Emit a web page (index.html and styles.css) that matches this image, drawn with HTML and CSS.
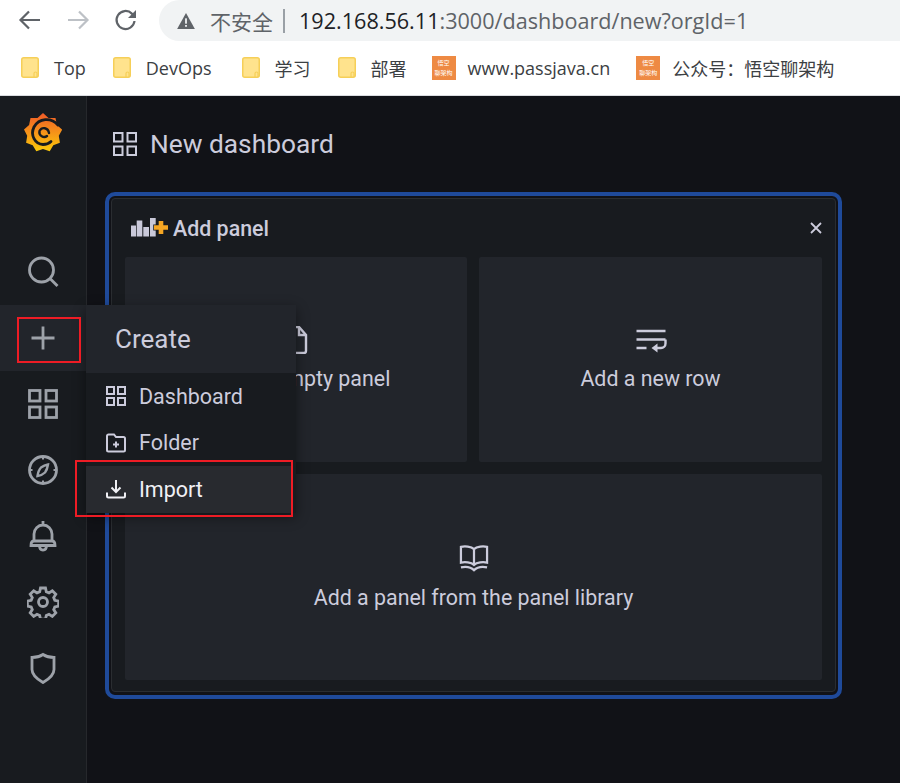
FILE: index.html
```html
<!DOCTYPE html>
<html>
<head>
  <meta charset="UTF-8">
  <title>New dashboard - Grafana</title>
  <link rel="stylesheet" href="styles.css">
</head>
<body>
  <!-- Browser toolbar -->
  <div class="browser">
    <div class="toolbar">
      <svg class="nav-btn" viewBox="0 0 24 24"><path d="M22 12H3M11 3.500L2.500 12l8.500 8.500"/></svg>
      <svg class="nav-btn nav-off" viewBox="0 0 24 24"><path d="M2 12h19M13 3.500l8.500 8.500-8.500 8.500"/></svg>
      <svg class="nav-btn" viewBox="0 0 24 24"><path d="M20.500 13a9 9 0 1 1-2.600-7.400L21 8.500"/><path class="solid" d="M22 2v8h-8z"/></svg>
      <div class="address">
        <svg class="warn" viewBox="0 0 20 18"><path d="M10 0l10 18H0z"/><rect x="9" y="6" width="2" height="6" fill="#f1f3f4"/><rect x="9" y="13.500" width="2" height="2" fill="#f1f3f4"/></svg>
        <span class="not-secure">不安全</span>
        <span class="sep"></span>
        <span class="url"><b>192.168.56.11</b>:3000/dashboard/new?orgId=1</span>
      </div>
    </div>
    <div class="bookmarks">
      <div class="mark mark-first"><svg class="folder" viewBox="0 0 18 21"><rect x="0.750" y="0.750" width="16.500" height="19.500" rx="2"/><path class="clip" d="M13 20v-3.500a1.500 1.500 0 0 1 3 0V20"/></svg><span>Top</span></div>
      <div class="mark mark-devops"><svg class="folder" viewBox="0 0 18 21"><rect x="0.750" y="0.750" width="16.500" height="19.500" rx="2"/><path class="clip" d="M13 20v-3.500a1.500 1.500 0 0 1 3 0V20"/></svg><span>DevOps</span></div>
      <div class="mark mark-first"><svg class="folder" viewBox="0 0 18 21"><rect x="0.750" y="0.750" width="16.500" height="19.500" rx="2"/><path class="clip" d="M13 20v-3.500a1.500 1.500 0 0 1 3 0V20"/></svg><span>学习</span></div>
      <div class="mark mark-last"><svg class="folder" viewBox="0 0 18 21"><rect x="0.750" y="0.750" width="16.500" height="19.500" rx="2"/><path class="clip" d="M13 20v-3.500a1.500 1.500 0 0 1 3 0V20"/></svg><span>部署</span></div>
      <div class="mark mark-site"><div class="favicon">悟空<br>聊架构</div><span>www.passjava.cn</span></div>
      <div class="mark mark-site"><div class="favicon">悟空<br>聊架构</div><span>公众号：悟空聊架构</span></div>
    </div>
  </div>

  <div class="app">
    <!-- Sidebar -->
    <div class="sidebar">
      <div class="logo-row">
        <svg class="logo" viewBox="0 0 38 40">
          <defs>
            <linearGradient id="flame" x1="0" y1="0" x2="0" y2="1">
              <stop offset="0" stop-color="#f05a28"/>
              <stop offset="1" stop-color="#fbca0a"/>
            </linearGradient>
          </defs>
          <path fill="url(#flame)" d="M19 0l5.500 5 7-.0 1.400 7 5.300 4.600-3.400 6.200 1.100 7-6.600 2.500-3.600 6-6.700-2.300-6.700 2.300-3.600-6-6.600-2.500 1.100-7L0 16.600 5.100 12l1.400-7h7z"/>
          <path class="logo-gap" d="M34 12C27 4 15 5 10 14 6 22 11 31 19 31.500c3 0 6-1 8-3"/>
          <path class="logo-gap inner" d="M25 20C24 14.500 18 13.500 15.500 18 14.500 23 20 25.500 23 23"/>
        </svg>
      </div>
      <div class="side-item">
        <svg class="side-icon" viewBox="0 0 32 32"><circle cx="14.500" cy="14" r="12"/><path d="M23.500 23l7 7"/></svg>
      </div>
      <div class="side-item side-active">
        <svg class="side-icon" viewBox="0 0 32 32"><path d="M16 4.500v23M4.500 16h23"/></svg>
        <!-- Create menu -->
        <div class="menu">
          <div class="menu-head">Create</div>
          <div class="menu-item">
            <svg class="menu-icon" viewBox="0 0 20 20"><rect x="1" y="1" width="7" height="7"/><rect x="12" y="1" width="7" height="7"/><rect x="1" y="12" width="7" height="7"/><rect x="12" y="12" width="7" height="7"/></svg>
            Dashboard
          </div>
          <div class="menu-item">
            <svg class="menu-icon" viewBox="0 0 20 20"><path d="M1 3a1.500 1.500 0 0 1 1.500-1.500H8L10 4h7.500A1.500 1.500 0 0 1 19 5.500V17a1.500 1.500 0 0 1-1.500 1.500h-15A1.500 1.500 0 0 1 1 17z"/><path d="M10 8.500v6M7 11.500h6"/></svg>
            Folder
          </div>
          <div class="menu-item menu-on">
            <svg class="menu-icon" viewBox="0 0 20 20"><path d="M10 1v11.500M5.500 8.500l4.500 4.500 4.500-4.500"/><path d="M1 13.500V17a1.500 1.500 0 0 0 1.500 1.500h15A1.500 1.500 0 0 0 19 17v-3.500"/></svg>
            Import
          </div>
        </div>
        <div class="red-box red-plus"></div>
        <div class="red-box red-import"></div>
      </div>
      <div class="side-item">
        <svg class="side-icon" viewBox="0 0 32 32"><rect x="2.500" y="2.500" width="10.500" height="10.500"/><rect x="19" y="2.500" width="10.500" height="10.500"/><rect x="2.500" y="19" width="10.500" height="10.500"/><rect x="19" y="19" width="10.500" height="10.500"/></svg>
      </div>
      <div class="side-item">
        <svg class="side-icon" viewBox="0 0 32 32"><circle cx="16" cy="16" r="13.500"/><path class="compass-needle" d="M21 10.500C20.500 14 19.500 16.500 18 18.500 16 20.500 13.500 21.500 10.500 22 11 18.500 12 15.500 14 13.500 16 12 18 11 21 10.500z"/><path class="compass-tick" d="M16 2.500v3M16 26.500v3M2.500 16h3M26.500 16h3"/></svg>
      </div>
      <div class="side-item">
        <svg class="side-icon" viewBox="0 0 32 32"><path d="M16 1v4M7 21v-7a9 9 0 0 1 18 0v7M4 25.500c0-2.500 1-4.500 3-4.500h18c2 0 3 2 3 4.500z"/><path d="M12.500 25.500c0 3 1.500 4.500 3.500 4.500s3.500-1.500 3.500-4.500"/></svg>
      </div>
      <div class="side-item">
        <svg class="side-icon" viewBox="0 0 32 32"><circle cx="16" cy="16" r="4.500"/><path d="M13.500 2h5l.8 3.800 2.700 1.100 3.300-2.100 3.500 3.500-2.100 3.300 1.100 2.700 3.800.8v5l-3.800.8-1.100 2.700 2.100 3.300-3.500 3.500-3.300-2.100-2.700 1.100-.8 3.800h-5l-.8-3.800-2.700-1.100-3.300 2.100-3.500-3.500 2.100-3.300-1.100-2.700-3.800-.8v-5l3.800-.8 1.100-2.700-2.100-3.300 3.500-3.500 3.300 2.100 2.700-1.100z"/></svg>
      </div>
      <div class="side-item">
        <svg class="side-icon" viewBox="0 0 32 32"><path d="M16 2.500c3 2 7 3 11 3v12c0 5-4 9-11 13C9 26.500 5 22.500 5 17.500v-12c4 0 8-1 11-3z"/></svg>
      </div>
    </div>

    <!-- Main -->
    <div class="main">
      <div class="page-head">
        <svg class="page-icon" viewBox="0 0 24 24"><rect x="1" y="1" width="8.500" height="8.500"/><rect x="14.500" y="1" width="8.500" height="8.500"/><rect x="1" y="14.500" width="8.500" height="8.500"/><rect x="14.500" y="14.500" width="8.500" height="8.500"/></svg>
        <span>New dashboard</span>
      </div>
      <div class="panel-frame">
        <div class="panel">
          <div class="panel-head">
            <svg class="panel-logo" viewBox="0 0 38 21">
              <rect x="1" y="7.500" width="5" height="11" fill="#c9c9d9"/>
              <rect x="6.700" y="2.500" width="5.600" height="16" fill="#c9c9d9"/>
              <rect x="13.300" y="9" width="5.700" height="9.500" fill="#c9c9d9"/>
              <rect x="20" y="0" width="5.700" height="18.500" fill="#c9c9d9"/>
              <path class="logo-plus" d="M28.700 3h4.600v4.200h4.700v4.600h-4.700V16h-4.600v-4.200H24V7.200h4.700z"/>
            </svg>
            <span class="panel-title">Add panel</span>
            <svg class="close" viewBox="0 0 12 12"><path d="M1 1l10 10M11 1L1 11"/></svg>
          </div>
          <div class="cards">
            <div class="card">
              <svg class="card-icon" viewBox="0 0 24 28"><path d="M2 3a2 2 0 0 1 2-2h11l7 8v16a2 2 0 0 1-2 2H4a2 2 0 0 1-2-2z"/><path d="M15 1v8h7"/></svg>
              <span>Add an empty panel</span>
            </div>
            <div class="card">
              <svg class="card-icon" viewBox="0 0 32 24"><path d="M1.500 3h29M1.500 11.500h29M1.500 20h10"/><path d="M30.500 11.500v4a4.500 4.500 0 0 1-4.500 4.500h-7"/><path class="solid" d="M22.500 15.500v9L16.500 20z"/></svg>
              <span>Add a new row</span>
            </div>
            <div class="card card-wide">
              <svg class="card-icon" viewBox="0 0 32 30"><path d="M16 5.500C13 2.500 6 2 2 3v17c4-1 11-.5 14 2.500 3-3 10-3.500 14-2.500V3c-4-1-11-.5-14 2.500zM16 5.500v17"/><path d="M2 25c5-1 11 0 14 3 3-3 9-4 14-3"/></svg>
              <span>Add a panel from the panel library</span>
            </div>
          </div>
        </div>
      </div>
    </div>
  </div>
</body>
</html>
```

FILE: styles.css
```css
* {
  box-sizing: border-box;
}

body {
  margin: 0;
  height: 783px;
  overflow: hidden;
  font-family: Roboto, sans-serif;
  background: #111217;
  display: flex;
  flex-direction: column;
}

svg {
  display: block;
  flex: none;
}

/* Browser toolbar */
.browser {
  height: 96px;
  background: #fff;
  flex: none;
  font-family: "Open Sans", "Noto Sans CJK SC", sans-serif;
}

.toolbar {
  height: 42px;
  display: flex;
  align-items: flex-start;
  padding-left: 18px;
}

.nav-btn {
  width: 24px;
  height: 24px;
  margin: 8px 24px 0 0;
  fill: none;
  stroke: #5f6368;
  stroke-width: 2.2;
}

.nav-btn .solid {
  fill: #5f6368;
  stroke: none;
}

.nav-off {
  stroke: #bdc1c6;
}

.address {
  width: 741px;
  height: 41px;
  margin-left: -3px;
  background: #f1f3f4;
  border-radius: 21px 0 0 21px;
  display: flex;
  align-items: center;
  padding-left: 18px;
}

.warn {
  width: 18px;
  height: 16px;
  fill: #5f6368;
}

.not-secure {
  margin-left: 15px;
  font-size: 21px;
  color: #5f6368;
}

.sep {
  width: 2px;
  height: 24px;
  background: #9aa0a6;
  margin: 0 14px 0 10px;
}

.url {
  font-size: 21.600px;
  color: #5f6368;
  white-space: nowrap;
}

.url b {
  font-weight: 400;
  color: #202124;
}

.bookmarks {
  height: 54px;
  border-bottom: 1px solid #dadce0;
  display: flex;
  align-items: center;
  padding: 0 0 2px 21px;
  font-size: 18px;
  color: #3c4043;
}

.mark {
  display: flex;
  align-items: center;
  margin-right: 28px;
  white-space: nowrap;
}

.mark-first {
  margin-right: 27px;
}

.mark-devops {
  margin-right: 30px;
}

.mark-last {
  margin-right: 25px;
}

.mark-site {
  margin-right: 26px;
}

.folder {
  width: 18px;
  height: 21px;
  margin-right: 15px;
}

.folder rect {
  fill: #ffe38d;
  stroke: #f6cf58;
  stroke-width: 1.5;
}

.folder .clip {
  fill: none;
  stroke: #f6cf58;
  stroke-width: 1.2;
}

.favicon {
  width: 24px;
  height: 24px;
  margin-right: 12px;
  background: #ee8a43;
  color: #fff;
  font-size: 6px;
  line-height: 10px;
  padding-top: 2px;
  text-align: center;
  overflow: hidden;
}

/* App */
.app {
  flex: 1;
  display: flex;
  min-height: 0;
}

.sidebar {
  width: 87px;
  flex: none;
  background: #181b1f;
  border-right: 1px solid #26282c;
}

.logo-row {
  height: 143px;
  padding: 17px 0 0 24px;
}

.logo {
  width: 38px;
  height: 40px;
}

.logo-gap {
  fill: none;
  stroke: #181b1f;
  stroke-width: 2.800;
  stroke-linecap: round;
}

.logo-gap.inner {
  stroke-width: 2.400;
}

.side-item {
  height: 66px;
  display: flex;
  align-items: center;
  justify-content: center;
  position: relative;
}

.side-active {
  background: #22252b;
}

.side-icon {
  width: 32px;
  height: 32px;
  fill: none;
  stroke: #9da2a9;
  stroke-width: 2.800;
}

.side-icon .compass-needle {
  stroke-width: 2.400;
}

.side-icon .compass-tick {
  stroke-width: 2;
}

/* Create menu */
.menu {
  position: absolute;
  left: 86px;
  top: 0;
  width: 210px;
  height: 208px;
  background: #181b1f;
  box-shadow: 0 4px 12px rgba(0, 0, 0, 0.45);
  z-index: 5;
}

.menu-head {
  height: 68px;
  background: #22252b;
  color: #ccccdc;
  font-size: 26px;
  display: flex;
  align-items: center;
  padding-left: 29px;
}

.menu-item {
  height: 46.500px;
  display: flex;
  align-items: center;
  padding-left: 20px;
  font-size: 21.500px;
  color: #ccccdc;
}

.menu-on {
  background: #282a2f;
  width: 206px;
  color: #f0f0f5;
}

.menu-icon {
  width: 20px;
  height: 20px;
  margin-right: 13px;
  fill: none;
  stroke: currentColor;
  stroke-width: 2;
}

.red-box {
  position: absolute;
  border: 2px solid #ee1c25;
  z-index: 6;
}

.red-plus {
  left: 17px;
  top: 12px;
  width: 64px;
  height: 46px;
}

.red-import {
  left: 75px;
  top: 155px;
  width: 218px;
  height: 57px;
}

/* Main */
.main {
  flex: 1;
  padding-left: 18px;
  padding-right: 58px;
}

.page-head {
  height: 96px;
  display: flex;
  align-items: center;
  padding-left: 8px;
  color: #ccccdc;
  font-size: 26.300px;
}

.page-icon {
  width: 24px;
  height: 24px;
  margin-right: 13px;
  fill: none;
  stroke: #ccccdc;
  stroke-width: 2;
}

.panel-frame {
  height: 507px;
  border: 4px solid #1f4a9a;
  border-radius: 10px;
  padding: 2px 2px 3px 2px;
}

.panel {
  height: 100%;
  background: #181b1f;
  border: 1px solid #2a2d31;
  border-radius: 4px;
  padding: 0 13px 12px;
}

.panel-head {
  height: 58px;
  display: flex;
  align-items: center;
  color: #ccccdc;
  padding-left: 5px;
}

.panel-logo {
  width: 38px;
  height: 21px;
  margin-right: 5px;
}

.logo-plus {
  fill: #f5a623;
  stroke: #181b1f;
  stroke-width: 1.500;
  paint-order: stroke;
}

.panel-title {
  font-size: 21.400px;
  font-weight: 500;
}

.close {
  width: 12px;
  height: 12px;
  margin-left: auto;
  fill: none;
  stroke: #ccccdc;
  stroke-width: 1.800;
}

.cards {
  display: grid;
  grid-template-columns: 342px 343px;
  grid-template-rows: 205px 206px;
  gap: 12px;
}

.card {
  background: #22252b;
  border-radius: 2px;
  display: flex;
  flex-direction: column;
  align-items: center;
  justify-content: center;
  color: #ccccdc;
  font-size: 21.400px;
  gap: 12px;
  padding-bottom: 2px;
}

.card-wide {
  grid-column: 1 / 3;
  gap: 13px;
  padding-bottom: 1px;
}

.card-icon {
  width: 32px;
  height: 28px;
  fill: none;
  stroke: #ccccdc;
  stroke-width: 2.400;
}

.card-icon .solid {
  fill: #ccccdc;
  stroke: none;
}
```
